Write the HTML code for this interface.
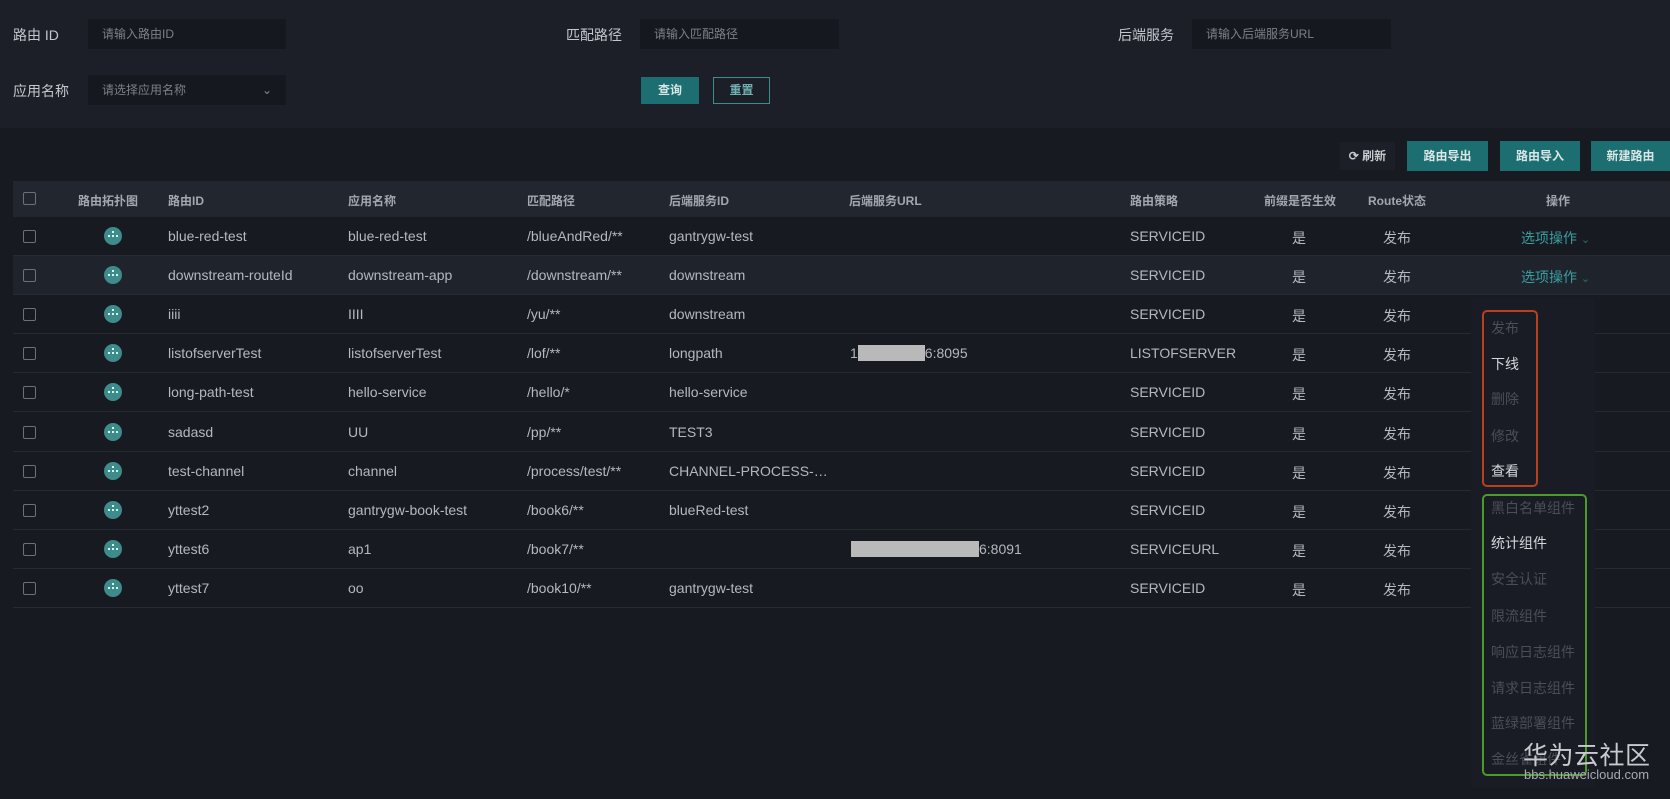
<!DOCTYPE html><html><head><meta charset="utf-8"><style>
*{box-sizing:border-box;margin:0;padding:0}
body{width:1670px;height:799px;background:#171a21;font-family:"Liberation Sans","Noto Sans CJK SC",sans-serif;color:#b4b8bf;position:relative;overflow:hidden;font-size:14px}
.abs{position:absolute}
.filter{left:0;top:0;width:1670px;height:128px;background:#1c1f28}
.lbl{font-size:14px;color:#c4c7cc}
.inp{background:#15181e;height:30px;font-size:12px;color:#7c8088;padding-left:14px;line-height:30px}
.btn{background:#1d6e70;color:#d8e6e6;font-size:12px;font-weight:bold;text-align:center}
.th{top:181px;left:13px;width:1657px;height:36px;background:#22262f}
.hd{font-size:12px;font-weight:bold;color:#a3a7ae;top:192px}
.row{left:13px;width:1657px;height:39px;border-bottom:1px solid #262a33}
.cb{width:13px;height:13px;border:1px solid #6c7079;border-radius:2px}
.ic{width:18px;height:18px;border-radius:50%;background:#3f8a8b}
.ic:after{content:"";position:absolute;left:4px;top:8px;width:2px;height:2px;background:#cfe;box-shadow:4px 0 #cfe,8px 0 #cfe,4px -4px #cfe}
.c{position:absolute;top:11px;white-space:nowrap}
.ctr{text-align:center;width:60px;margin-left:-30px}
.dd{left:1471px;top:298px;width:124px;height:490px;background:#191c24}
.it{left:1491px;font-size:14px;color:#4a4e56}
.it.on{color:#d4d6da}
</style></head><body>
<div class="abs filter"></div>
<div class="abs lbl" style="left:13px;top:25px">路由 ID</div>
<div class="abs inp" style="left:88px;top:19px;width:198px">请输入路由ID</div>
<div class="abs lbl" style="left:566px;top:25px">匹配路径</div>
<div class="abs inp" style="left:640px;top:19px;width:199px">请输入匹配路径</div>
<div class="abs lbl" style="left:1118px;top:25px">后端服务</div>
<div class="abs inp" style="left:1192px;top:19px;width:199px">请输入后端服务URL</div>
<div class="abs lbl" style="left:13px;top:81px">应用名称</div>
<div class="abs inp" style="left:88px;top:75px;width:198px">请选择应用名称<span style="position:absolute;right:14px;top:0;color:#888">&#8964;</span></div>
<div class="abs btn" style="left:641px;top:77px;width:58px;height:27px;line-height:27px">查询</div>
<div class="abs btn" style="left:713px;top:77px;width:57px;height:27px;line-height:25px;background:none;border:1px solid #3a8e90;color:#6fb0b2">重置</div>
<div class="abs" style="left:1340px;top:142px;width:55px;height:28px;background:#1c1f27;font-size:12px;font-weight:bold;line-height:28px;text-align:center;color:#c6c8cc">⟳ 刷新</div>
<div class="abs btn" style="left:1407px;top:141px;width:81px;height:30px;line-height:30px">路由导出</div>
<div class="abs btn" style="left:1500px;top:141px;width:80px;height:30px;line-height:30px">路由导入</div>
<div class="abs btn" style="left:1591px;top:141px;width:79px;height:30px;line-height:30px">新建路由</div>
<div class="abs th"></div>
<div class="abs cb" style="left:23px;top:192px"></div>
<div class="abs hd" style="left:78px">路由拓扑图</div>
<div class="abs hd" style="left:168px">路由ID</div>
<div class="abs hd" style="left:348px">应用名称</div>
<div class="abs hd" style="left:527px">匹配路径</div>
<div class="abs hd" style="left:669px">后端服务ID</div>
<div class="abs hd" style="left:849px">后端服务URL</div>
<div class="abs hd" style="left:1130px">路由策略</div>
<div class="abs hd" style="left:1264px">前缀是否生效</div>
<div class="abs hd" style="left:1368px">Route状态</div>
<div class="abs hd" style="left:1546px">操作</div>
<div id="rows"></div>
<script>
var d=[["blue-red-test","blue-red-test","/blueAndRed/**","gantrygw-test","","SERVICEID"],
["downstream-routeId","downstream-app","/downstream/**","downstream","","SERVICEID"],
["iiii","IIII","/yu/**","downstream","","SERVICEID"],
["listofserverTest","listofserverTest","/lof/**","longpath","A","LISTOFSERVER"],
["long-path-test","hello-service","/hello/*","hello-service","","SERVICEID"],
["sadasd","UU","/pp/**","TEST3","","SERVICEID"],
["test-channel","channel","/process/test/**","CHANNEL-PROCESS-…","","SERVICEID"],
["yttest2","gantrygw-book-test","/book6/**","blueRed-test","","SERVICEID"],
["yttest6","ap1","/book7/**","","B","SERVICEURL"],
["yttest7","oo","/book10/**","gantrygw-test","","SERVICEID"]];
var h="";
d.forEach(function(r,i){var t=217+i*39.1;
h+='<div class="abs row" style="top:'+t+'px;'+(i==1?'background:#1f232c':'')+'">';
h+='<div class="abs cb" style="left:10px;top:13px"></div><div class="abs ic" style="left:91px;top:10px"></div>';
h+='<div class="c" style="left:155px">'+r[0]+'</div><div class="c" style="left:335px">'+r[1]+'</div><div class="c" style="left:514px">'+r[2]+'</div><div class="c" style="left:656px">'+r[3]+'</div>';
if(r[4]=="A")h+='<div class="c" style="left:837px">1<span style="display:inline-block;width:67px;height:16px;background:#b9b9b9;vertical-align:-3px"></span>6:8095</div>';
if(r[4]=="B")h+='<div class="c" style="left:838px"><span style="display:inline-block;width:128px;height:16px;background:#b9b9b9;vertical-align:-3px"></span>6:8091</div>';
h+='<div class="c" style="left:1117px">'+r[5]+'</div><div class="c ctr" style="left:1286px">是</div><div class="c ctr" style="left:1384px">发布</div>';
if(i<2)h+='<div class="c" style="left:1508px;color:#3a9ea0">选项操作 <span style="color:#2f6f71;font-size:11px">&#8964;</span></div>';
h+='</div>';});
document.getElementById('rows').innerHTML=h;
</script>
<div class="abs dd"></div>
<div class="abs" style="left:1482px;top:310px;width:56px;height:177px;border:2px solid #b8401f;border-radius:5px"></div>
<div class="abs" style="left:1482px;top:494px;width:105px;height:282px;border:2px solid #4a9b2a;border-radius:5px"></div>
<div class="abs it" style="top:318px">发布</div>
<div class="abs it on" style="top:354px">下线</div>
<div class="abs it" style="top:389px">删除</div>
<div class="abs it" style="top:426px">修改</div>
<div class="abs it on" style="top:461px">查看</div>
<div class="abs it" style="top:498px">黑白名单组件</div>
<div class="abs it on" style="top:533px">统计组件</div>
<div class="abs it" style="top:569px">安全认证</div>
<div class="abs it" style="top:606px">限流组件</div>
<div class="abs it" style="top:642px">响应日志组件</div>
<div class="abs it" style="top:678px">请求日志组件</div>
<div class="abs it" style="top:713px">蓝绿部署组件</div>
<div class="abs it" style="top:749px">金丝雀组件</div>
<div class="abs" style="left:1523px;top:736px;font-size:25px;color:#c8cacd;letter-spacing:0.5px">华为云社区</div>
<div class="abs" style="left:1524px;top:767px;font-size:13px;color:#a8abb0">bbs.huaweicloud.com</div>
</body></html>
